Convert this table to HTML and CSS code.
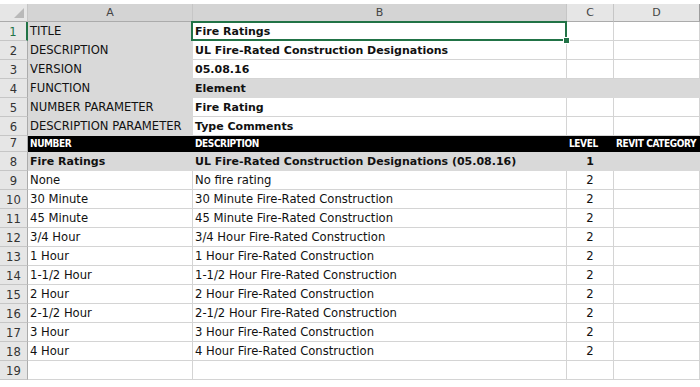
FILE: index.html
```html
<!DOCTYPE html>
<html lang="en">
<head>
    <meta charset="UTF-8">
    <meta name="viewport" content="width=device-width, initial-scale=1.0">
    <title>Fire Ratings</title>
    <link rel="stylesheet" href="styles.css">
</head>
<body>
    <div class="sheet">
        <!-- column letters -->
        <div class="hd corner"><span class="tri"></span></div>
        <div class="hd colhd on">A</div>
        <div class="hd colhd on">B</div>
        <div class="hd colhd">C</div>
        <div class="hd colhd last">D</div>

        <!-- parameter block -->
        <div class="rn first">1</div>
        <div class="c fill">TITLE</div>
        <div class="c b active">Fire Ratings</div>
        <div class="c"></div>
        <div class="c"></div>

        <div class="rn">2</div>
        <div class="c fill">DESCRIPTION</div>
        <div class="c b">UL Fire-Rated Construction Designations</div>
        <div class="c"></div>
        <div class="c"></div>

        <div class="rn">3</div>
        <div class="c fill">VERSION</div>
        <div class="c b">05.08.16</div>
        <div class="c"></div>
        <div class="c"></div>

        <div class="rn">4</div>
        <div class="c fill">FUNCTION</div>
        <div class="c b fill">Element</div>
        <div class="c fill"></div>
        <div class="c fill"></div>

        <div class="rn">5</div>
        <div class="c fill">NUMBER PARAMETER</div>
        <div class="c b">Fire Rating</div>
        <div class="c"></div>
        <div class="c"></div>

        <div class="rn">6</div>
        <div class="c fill">DESCRIPTION PARAMETER</div>
        <div class="c b">Type Comments</div>
        <div class="c"></div>
        <div class="c"></div>

        <!-- table heading -->
        <div class="rn">7</div>
        <div class="c th">NUMBER</div>
        <div class="c th">DESCRIPTION</div>
        <div class="c th">LEVEL</div>
        <div class="c th">REVIT CATEGORY</div>

        <div class="rn">8</div>
        <div class="c fill b">Fire Ratings</div>
        <div class="c fill b">UL Fire-Rated Construction Designations (05.08.16)</div>
        <div class="c fill b mid">1</div>
        <div class="c fill"></div>

        <div class="rn">9</div>
        <div class="c">None</div>
        <div class="c">No fire rating</div>
        <div class="c mid">2</div>
        <div class="c"></div>

        <div class="rn">10</div>
        <div class="c">30 Minute</div>
        <div class="c">30 Minute Fire-Rated Construction</div>
        <div class="c mid">2</div>
        <div class="c"></div>

        <div class="rn">11</div>
        <div class="c">45 Minute</div>
        <div class="c">45 Minute Fire-Rated Construction</div>
        <div class="c mid">2</div>
        <div class="c"></div>

        <div class="rn">12</div>
        <div class="c">3/4 Hour</div>
        <div class="c">3/4 Hour Fire-Rated Construction</div>
        <div class="c mid">2</div>
        <div class="c"></div>

        <div class="rn">13</div>
        <div class="c">1 Hour</div>
        <div class="c">1 Hour Fire-Rated Construction</div>
        <div class="c mid">2</div>
        <div class="c"></div>

        <div class="rn">14</div>
        <div class="c">1-1/2 Hour</div>
        <div class="c">1-1/2 Hour Fire-Rated Construction</div>
        <div class="c mid">2</div>
        <div class="c"></div>

        <div class="rn">15</div>
        <div class="c">2 Hour</div>
        <div class="c">2 Hour Fire-Rated Construction</div>
        <div class="c mid">2</div>
        <div class="c"></div>

        <div class="rn">16</div>
        <div class="c">2-1/2 Hour</div>
        <div class="c">2-1/2 Hour Fire-Rated Construction</div>
        <div class="c mid">2</div>
        <div class="c"></div>

        <div class="rn">17</div>
        <div class="c">3 Hour</div>
        <div class="c">3 Hour Fire-Rated Construction</div>
        <div class="c mid">2</div>
        <div class="c"></div>

        <div class="rn">18</div>
        <div class="c">4 Hour</div>
        <div class="c">4 Hour Fire-Rated Construction</div>
        <div class="c mid">2</div>
        <div class="c"></div>

        <div class="rn">19</div>
        <div class="c"></div>
        <div class="c"></div>
        <div class="c"></div>
        <div class="c"></div>
    </div>
</body>
</html>
```

FILE: styles.css
```css
body {
    margin: 0;
    padding-top: 4px;
    background: #fff;
    font-family: "DejaVu Sans", sans-serif;
    font-size: 11.6px;
    color: #111;
}
.sheet {
    display: grid;
    grid-template-columns: 28px 165px 374px 47px 86px;
    grid-template-rows: 18px repeat(6, 19px) 16px repeat(12, 19px);
    width: 700px;
}
.hd {
    background: #e6e6e6;
    border-right: 1px solid #c6c6c6;
    border-bottom: 1px solid #ababab;
    color: #444;
    font-size: 11px;
    display: flex;
    align-items: flex-end;
    justify-content: center;
    padding-bottom: 1px;
    line-height: 14px;
}
.hd.on {
    background: #d4d4d4;
}
.hd.last {
    border-right: 1px solid #9c9c9c;
}
.corner {
    position: relative;
}
.tri {
    position: absolute;
    right: 3px;
    bottom: 3px;
    width: 0;
    height: 0;
    border-left: 10px solid transparent;
    border-bottom: 10px solid #b9b9b9;
}
.rn {
    background: #e6e6e6;
    border-right: 1px solid #ababab;
    border-bottom: 1px solid #c6c6c6;
    color: #333;
    display: flex;
    align-items: flex-end;
    justify-content: center;
    padding-bottom: 0;
    line-height: 15px;
}
.rn.first {
    color: #217346;
    border-right: 2px solid #217346;
}
.c {
    border-right: 1px solid #d4d4d4;
    border-bottom: 1px solid #d4d4d4;
    display: flex;
    align-items: flex-end;
    padding: 0 0 1px 2px;
    line-height: 15px;
    white-space: nowrap;
    min-width: 0;
}
.fill {
    background: #d9d9d9;
    border-color: #d9d9d9;
}
.b {
    font-weight: bold;
    font-size: 11px;
    padding-bottom: 1px;
}
.mid {
    justify-content: center;
    padding-left: 0;
}
.th {
    background: #000;
    border-color: #000;
    color: #fff;
    font-family: "DejaVu Sans Condensed", "DejaVu Sans", sans-serif;
    font-weight: bold;
    font-size: 10px;
    letter-spacing: -0.4px;
    padding-bottom: 1px;
    line-height: 13px;
}
.active {
    position: relative;
}
.active::after {
    content: "";
    position: absolute;
    left: -2px;
    top: -1px;
    right: -1px;
    bottom: -1px;
    border: 2px solid #217346;
}
.active::before {
    content: "";
    position: absolute;
    right: -4px;
    bottom: -4px;
    width: 5px;
    height: 5px;
    background: #217346;
    border: 1px solid #fff;
    z-index: 1;
}
```
